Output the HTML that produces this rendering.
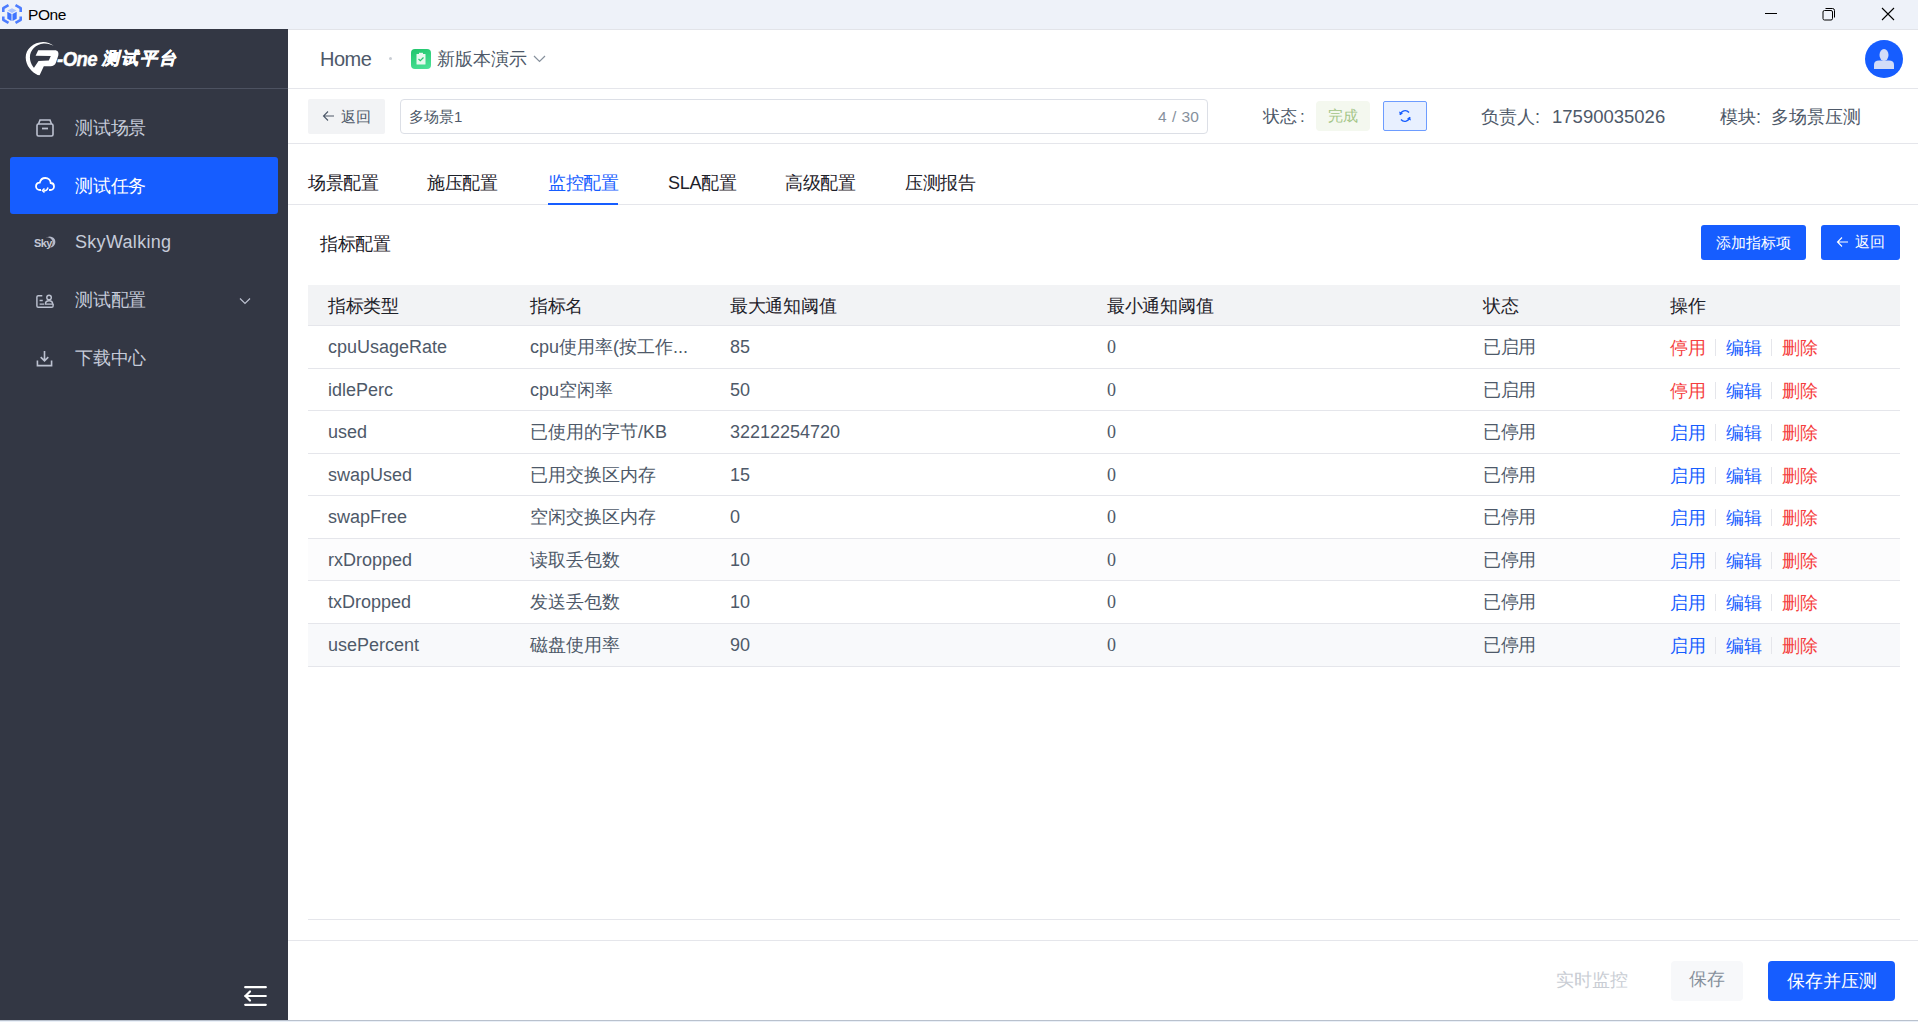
<!DOCTYPE html>
<html><head><meta charset="utf-8">
<style>
*{box-sizing:border-box;margin:0;padding:0}
html,body{width:1918px;height:1022px;overflow:hidden;background:#fff;font-family:"Liberation Sans",sans-serif;color:#1d2129}
.abs{position:absolute}
#titlebar{position:absolute;left:0;top:0;width:1918px;height:29px;background:#eef2f9}
#side{position:absolute;left:0;top:29px;width:288px;height:991px;background:#333744}
#main{position:absolute;left:288px;top:30px;width:1630px;height:990px;background:#fff}
#bottomline{position:absolute;left:0;top:1020px;width:1918px;height:2px;background:#eaf0f8;border-top:1px solid #b9c1cd}
.hl{position:absolute;height:1px;background:#e5e6eb}
.menu{position:absolute;left:0;width:288px;height:57px;color:#c6cbd9;font-size:18px}
.menu .ic{position:absolute;left:36px;top:20px;width:18px;height:18px}
.menu .tx{position:absolute;left:75px;top:0;line-height:57px;letter-spacing:-0.25px}
.tab{position:absolute;top:171px;font-size:18px;line-height:24px;color:#1d2129;letter-spacing:-0.3px}
.th{position:absolute;top:294px;font-size:18px;line-height:24px;color:#1d2129;letter-spacing:-0.3px}
.row{position:absolute;left:308px;width:1592px;height:43px;border-bottom:1px solid #e5e6eb}
.cell{position:absolute;top:0;line-height:42px;font-size:18px;color:#4e5969;white-space:nowrap}
.serif{font-family:"Liberation Serif",serif}
.op{position:absolute;top:1px;line-height:42px;font-size:18px;white-space:nowrap;letter-spacing:-0.3px}
.red{color:#f53f3f}.blue{color:#165dff}
.sep{position:absolute;top:13px;width:1px;height:17px;background:#e5e6eb}
</style></head><body>
<div id="titlebar">
  <svg class="abs" style="left:1px;top:3px" width="22" height="22" viewBox="0 0 22 22">
    <g fill="none" stroke="#4d7dff" stroke-width="2.6" stroke-linejoin="round">
      <path d="M7.5 2.2 L2.3 5.2 L2.3 9"/>
      <path d="M14.5 2.2 L19.7 5.2 L19.7 9"/>
      <path d="M2.3 13.5 L2.3 16.8 L7.5 19.8"/>
      <path d="M19.7 13.5 L19.7 16.8 L14.5 19.8"/>
    </g>
    <path d="M6.3 8.8 L10.5 11 L10.5 18 L6.3 15.8Z" fill="#3f74ff"/>
    <path d="M15.7 8.8 L11.5 11 L11.5 18 L15.7 15.8Z" fill="#3f74ff"/>
    <path d="M6.5 7.6 L11 5.3 L15.5 7.6 L11 9.9Z" fill="#a9c3ff"/>
  </svg>
  <div class="abs" style="left:28px;top:5px;font-size:15.5px;line-height:20px;color:#000;letter-spacing:-0.4px">POne</div>
  <div class="abs" style="left:1765px;top:13px;width:12px;height:1px;background:#000"></div>
  <svg class="abs" style="left:1822px;top:7px" width="14" height="14" viewBox="0 0 14 14"><rect x="1" y="3.5" width="9.5" height="9.5" rx="1.5" fill="none" stroke="#000" stroke-width="1"/><path d="M3.5 1.5 H10.5 A2 2 0 0 1 12.5 3.5 V10.5" fill="none" stroke="#000" stroke-width="1"/></svg>
  <svg class="abs" style="left:1881px;top:7px" width="14" height="14" viewBox="0 0 14 14"><path d="M1 1 L13 13 M13 1 L1 13" stroke="#000" stroke-width="1.1"/></svg>
</div>

<div id="side">
  <!-- logo -->
  <svg class="abs" style="left:20px;top:9px" width="50" height="42" viewBox="20 38 50 42">
    <path d="M53.7 45.8 C50.5 43 46.5 41.8 43 41.9 C33.5 42.2 25.6 49 25.7 57.5 C25.8 65.5 31.5 72.5 38.5 75.3 L40 73 C34.5 70 30 64 29.9 57.5 C29.8 50 36 44.2 43.5 43.5 C47.5 43.2 51 44.3 53.7 45.8 Z" fill="#fff"/>
    <path d="M38.2 50.3 L54.8 50.3 C57.8 50.3 59 52.5 58.3 55.5 L56 62.5 C55 65 53.2 66.3 50.5 66.3 L43.8 66.3 L39.6 75.3 L37 74.5 L33.5 68.5 L38.5 61 L48.8 60.6 L50.8 56 L35.6 55.7 Z" fill="#fff"/>
  </svg>
  <div class="abs" style="left:57px;top:16px;font-size:20px;line-height:28px;font-weight:bold;font-style:italic;color:#fff;letter-spacing:-0.6px;transform:scaleX(0.93);transform-origin:left;-webkit-text-stroke:0.4px #fff">-One</div>
  <div class="abs" style="left:102px;top:17px;font-size:17px;line-height:26px;font-weight:bold;font-style:italic;color:#fff;letter-spacing:2px;-webkit-text-stroke:0.5px #fff">测试平台</div>
  <div class="abs" style="left:0;top:59px;width:288px;height:1px;background:#4d5261"></div>

  <div class="menu" style="top:71px">
    <svg class="ic" viewBox="0 0 18 18" style="left:36px;top:19px"><rect x="1" y="5" width="16" height="12" rx="1.5" fill="none" stroke="#bcc1d0" stroke-width="1.6"/><path d="M2.5 5 L4 1 H14 L15.5 5" fill="none" stroke="#bcc1d0" stroke-width="1.6"/><path d="M6 9.5 H12" stroke="#bcc1d0" stroke-width="1.8"/></svg>
    <div class="tx">测试场景</div>
  </div>
  <div class="abs" style="left:10px;top:128px;width:268px;height:57px;background:#165dff;border-radius:3px"></div>
  <div class="menu" style="top:129px;color:#fff">
    <svg class="ic" viewBox="0 0 20 18" style="left:35px;top:18px;width:20px"><path d="M6 14 H5 C2.5 14 1 12.3 1 10.2 C1 8 2.8 6.5 4.8 6.6 C5.5 3.6 7.8 2 10.3 2 C13.3 2 15.5 4.3 15.7 7 C17.6 7 19 8.5 19 10.4 C19 12.4 17.5 14 15.5 14 H14" fill="none" stroke="#fff" stroke-width="1.8"/><path d="M13 11.5 C12.5 13.8 10.8 15 9 14.5" fill="none" stroke="#fff" stroke-width="1.6"/><path d="M9.5 12.5 L7.5 14.5 L9.5 16.5" fill="none" stroke="#fff" stroke-width="1.6"/></svg>
    <div class="tx">测试任务</div>
  </div>
  <div class="menu" style="top:185px">
    <svg class="abs" style="left:42px;top:21px" width="14" height="14" viewBox="0 0 14 14"><circle cx="7.8" cy="7" r="5.6" fill="#b4b9ca"/><circle cx="5.3" cy="7.6" r="5.3" fill="#333744"/></svg><div class="abs" style="left:34px;top:1px;line-height:57px;font-size:11px;font-weight:bold;color:#c3c7d4;letter-spacing:-0.6px;text-shadow:0 0 1px #333744">Sky</div>
    <div class="tx" style="letter-spacing:0.3px">SkyWalking</div>
  </div>
  <div class="menu" style="top:243px">
    <svg class="ic" viewBox="0 0 20 18" style="left:36px;top:21px;width:18px;height:16px" preserveAspectRatio="none"><path d="M7 3 H2.5 C1.7 3 1 3.7 1 4.5 V14.5 C1 15.3 1.7 16 2.5 16 H17.5 C18.3 16 19 15.3 19 14.5 V12" fill="none" stroke="#bcc1d0" stroke-width="1.6"/><path d="M4 8.5 H7.5 M4 12.5 H9" stroke="#bcc1d0" stroke-width="1.6"/><circle cx="14.5" cy="5" r="2.5" fill="none" stroke="#bcc1d0" stroke-width="1.6"/><path d="M10.5 12.5 C10.5 10 12.3 8.7 14.5 8.7 C16.7 8.7 18.5 10 18.5 12.5Z" fill="none" stroke="#bcc1d0" stroke-width="1.6"/></svg>
    <div class="tx">测试配置</div>
    <svg class="abs" style="left:239px;top:25px" width="12" height="8" viewBox="0 0 12 8"><path d="M1 1.5 L6 6.5 L11 1.5" fill="none" stroke="#bcc1d0" stroke-width="1.2"/></svg>
  </div>
  <div class="menu" style="top:301px">
    <svg class="ic" viewBox="0 0 18 18" style="left:36px;top:20px;width:17px;height:17px"><path d="M9 1 V11 M5 7.5 L9 11.5 L13 7.5" fill="none" stroke="#bcc1d0" stroke-width="1.7"/><path d="M1.5 11 V16.5 H16.5 V11" fill="none" stroke="#bcc1d0" stroke-width="1.7"/></svg>
    <div class="tx">下载中心</div>
  </div>
  <svg class="abs" style="left:243px;top:956px" width="24" height="22" viewBox="0 0 24 22"><path d="M2.2 2.2 H22.8 M2.5 11 H22.8 M2.2 19.8 H22.8" stroke="#fff" stroke-width="2.2" stroke-linecap="round"/><path d="M7 6.5 L2.5 11 L7 15.5" fill="none" stroke="#fff" stroke-width="2.2" stroke-linecap="round"/></svg>
</div>

<div id="main"></div>
<div class="hl" style="left:288px;top:29px;width:1630px;background:#e2e4e9"></div>
<!-- header -->
<div class="abs" style="left:320px;top:47px;font-size:20px;line-height:24px;color:#4e5969;letter-spacing:-0.5px">Home</div>
<div class="abs" style="left:389px;top:57px;width:3px;height:3px;border-radius:50%;background:#c9cdd4"></div>
<div class="abs" style="left:411px;top:49px;width:20px;height:20px;border-radius:4px;background:linear-gradient(160deg,#1fc46a,#4ee39a)"></div>
<svg class="abs" style="left:411px;top:49px" width="20" height="20" viewBox="0 0 20 20"><rect x="5.5" y="5" width="9" height="10.5" fill="#e8f9ef" rx="0.5"/><rect x="8" y="3.8" width="4" height="2" fill="#e8f9ef"/><path d="M7.5 10 L9.3 11.7 L12.5 8.5" fill="none" stroke="#27c46f" stroke-width="1.2"/></svg>
<div class="abs" style="left:437px;top:47px;font-size:18px;line-height:24px;color:#4e5969">新版本演示</div>
<svg class="abs" style="left:533px;top:55px" width="13" height="8" viewBox="0 0 13 8"><path d="M1 1 L6.5 6.5 L12 1" fill="none" stroke="#86909c" stroke-width="1.2"/></svg>
<div class="abs" style="left:1865px;top:40px;width:38px;height:38px;border-radius:50%;background:#165dff"></div>
<svg class="abs" style="left:1865px;top:40px" width="38" height="38" viewBox="0 0 38 38"><ellipse cx="19" cy="15" rx="4.5" ry="6" fill="#d2dcf8"/><path d="M9 24.5 C9 22 11 20.5 14 20.5 H24 C27 20.5 29 22 29 24.5 V29 H9Z" fill="#d2dcf8"/></svg>
<div class="hl" style="left:288px;top:88px;width:1630px"></div>

<!-- row 2 -->
<div class="abs" style="left:308px;top:99px;width:77px;height:35px;background:#f2f3f5;border-radius:2px"></div>
<svg class="abs" style="left:322px;top:110px" width="13" height="12" viewBox="0 0 13 12"><path d="M12 6 H1.5 M6 1.5 L1.5 6 L6 10.5" fill="none" stroke="#4e5969" stroke-width="1.1"/></svg>
<div class="abs" style="left:341px;top:106px;font-size:15px;line-height:21px;color:#4e5969">返回</div>
<div class="abs" style="left:400px;top:99px;width:808px;height:35px;border:1px solid #dcdfe6;border-radius:4px"></div>
<div class="abs" style="left:409px;top:106px;font-size:15px;line-height:21px;color:#4e5969">多场景1</div>
<div class="abs" style="left:1158px;top:107px;font-size:15.5px;line-height:20px;color:#86909c;word-spacing:1px">4 / 30</div>
<div class="abs" style="left:1263px;top:105px;font-size:17px;line-height:24px;color:#4e5969">状态<span style="margin-left:3px">:</span></div>
<div class="abs" style="left:1316px;top:101px;width:54px;height:30px;background:#f4f8ef;border-radius:4px"></div>
<div class="abs" style="left:1328px;top:106px;font-size:15px;line-height:20px;color:#a3c587">完成</div>
<div class="abs" style="left:1383px;top:101px;width:44px;height:30px;background:#e8f0ff;border:1px solid #6d9cff;border-radius:2px"></div>
<svg class="abs" style="left:1398px;top:109px" width="14" height="14" viewBox="0 0 14 14"><path d="M2.2 6 A5 5 0 0 1 11 3.5 M11.8 8 A5 5 0 0 1 3 10.5" fill="none" stroke="#165dff" stroke-width="1.4"/><path d="M1 2.5 L2.2 6.2 L5 4.2Z M13 11.5 L11.8 7.8 L9 9.8Z" fill="#165dff"/></svg>
<div class="abs" style="left:1481px;top:105px;font-size:18px;line-height:24px;color:#4e5969;white-space:nowrap">负责人<span style="margin-right:12px">:</span><span style="font-size:18.5px">17590035026</span></div>
<div class="abs" style="left:1720px;top:105px;font-size:18px;line-height:24px;color:#4e5969;white-space:nowrap">模块<span style="margin-right:10px">:</span>多场景压测</div>
<div class="hl" style="left:288px;top:143px;width:1630px"></div>

<!-- tabs -->
<div class="tab" style="left:308px">场景配置</div>
<div class="tab" style="left:427px">施压配置</div>
<div class="tab" style="left:548px;color:#165dff">监控配置</div>
<div class="tab" style="left:668px">SLA配置</div>
<div class="tab" style="left:785px">高级配置</div>
<div class="tab" style="left:905px">压测报告</div>
<div class="hl" style="left:288px;top:204px;width:1630px"></div>
<div class="abs" style="left:548px;top:203px;width:70px;height:2px;background:#165dff"></div>

<!-- section -->
<div class="abs" style="left:320px;top:232px;font-size:18px;line-height:24px;color:#1d2129;letter-spacing:-0.3px">指标配置</div>
<div class="abs" style="left:1701px;top:225px;width:105px;height:35px;background:#165dff;border-radius:3px;color:#fff;font-size:15px;line-height:35px;text-align:center">添加指标项</div>
<div class="abs" style="left:1821px;top:225px;width:79px;height:35px;background:#165dff;border-radius:3px"></div>
<svg class="abs" style="left:1836px;top:236px" width="13" height="12" viewBox="0 0 13 12"><path d="M12 6 H1.5 M6 1.5 L1.5 6 L6 10.5" fill="none" stroke="#fff" stroke-width="1.1"/></svg>
<div class="abs" style="left:1855px;top:232px;font-size:15px;line-height:20px;color:#fff">返回</div>

<!-- table header -->
<div class="abs" style="left:308px;top:285px;width:1592px;height:41px;background:#f2f3f5;border-bottom:1px solid #e5e6eb"></div>
<div class="th" style="left:328px">指标类型</div>
<div class="th" style="left:530px">指标名</div>
<div class="th" style="left:730px">最大通知阈值</div>
<div class="th" style="left:1107px">最小通知阈值</div>
<div class="th" style="left:1483px">状态</div>
<div class="th" style="left:1670px">操作</div>
<div class="row" style="top:326px;height:43px;">
  <div class="cell" style="left:20px">cpuUsageRate</div><div class="cell" style="left:222px">cpu使用率(按工作...</div><div class="cell" style="left:422px">85</div><div class="cell serif" style="left:799px">0</div><div class="cell" style="left:1175px;letter-spacing:-0.3px">已启用</div>
  <div class="op red" style="left:1362px">停用</div><div class="sep" style="left:1407px"></div><div class="op blue" style="left:1418px">编辑</div><div class="sep" style="left:1463px"></div><div class="op red" style="left:1474px">删除</div>
</div>
<div class="row" style="top:369px;height:42px;">
  <div class="cell" style="left:20px">idlePerc</div><div class="cell" style="left:222px">cpu空闲率</div><div class="cell" style="left:422px">50</div><div class="cell serif" style="left:799px">0</div><div class="cell" style="left:1175px;letter-spacing:-0.3px">已启用</div>
  <div class="op red" style="left:1362px">停用</div><div class="sep" style="left:1407px"></div><div class="op blue" style="left:1418px">编辑</div><div class="sep" style="left:1463px"></div><div class="op red" style="left:1474px">删除</div>
</div>
<div class="row" style="top:411px;height:43px;">
  <div class="cell" style="left:20px">used</div><div class="cell" style="left:222px">已使用的字节/KB</div><div class="cell" style="left:422px">32212254720</div><div class="cell serif" style="left:799px">0</div><div class="cell" style="left:1175px;letter-spacing:-0.3px">已停用</div>
  <div class="op blue" style="left:1362px">启用</div><div class="sep" style="left:1407px"></div><div class="op blue" style="left:1418px">编辑</div><div class="sep" style="left:1463px"></div><div class="op red" style="left:1474px">删除</div>
</div>
<div class="row" style="top:454px;height:42px;">
  <div class="cell" style="left:20px">swapUsed</div><div class="cell" style="left:222px">已用交换区内存</div><div class="cell" style="left:422px">15</div><div class="cell serif" style="left:799px">0</div><div class="cell" style="left:1175px;letter-spacing:-0.3px">已停用</div>
  <div class="op blue" style="left:1362px">启用</div><div class="sep" style="left:1407px"></div><div class="op blue" style="left:1418px">编辑</div><div class="sep" style="left:1463px"></div><div class="op red" style="left:1474px">删除</div>
</div>
<div class="row" style="top:496px;height:43px;">
  <div class="cell" style="left:20px">swapFree</div><div class="cell" style="left:222px">空闲交换区内存</div><div class="cell" style="left:422px">0</div><div class="cell serif" style="left:799px">0</div><div class="cell" style="left:1175px;letter-spacing:-0.3px">已停用</div>
  <div class="op blue" style="left:1362px">启用</div><div class="sep" style="left:1407px"></div><div class="op blue" style="left:1418px">编辑</div><div class="sep" style="left:1463px"></div><div class="op red" style="left:1474px">删除</div>
</div>
<div class="row" style="top:539px;height:42px;background:#fcfcfd;">
  <div class="cell" style="left:20px">rxDropped</div><div class="cell" style="left:222px">读取丢包数</div><div class="cell" style="left:422px">10</div><div class="cell serif" style="left:799px">0</div><div class="cell" style="left:1175px;letter-spacing:-0.3px">已停用</div>
  <div class="op blue" style="left:1362px">启用</div><div class="sep" style="left:1407px"></div><div class="op blue" style="left:1418px">编辑</div><div class="sep" style="left:1463px"></div><div class="op red" style="left:1474px">删除</div>
</div>
<div class="row" style="top:581px;height:43px;">
  <div class="cell" style="left:20px">txDropped</div><div class="cell" style="left:222px">发送丢包数</div><div class="cell" style="left:422px">10</div><div class="cell serif" style="left:799px">0</div><div class="cell" style="left:1175px;letter-spacing:-0.3px">已停用</div>
  <div class="op blue" style="left:1362px">启用</div><div class="sep" style="left:1407px"></div><div class="op blue" style="left:1418px">编辑</div><div class="sep" style="left:1463px"></div><div class="op red" style="left:1474px">删除</div>
</div>
<div class="row" style="top:624px;height:43px;background:#f8f9fb;">
  <div class="cell" style="left:20px">usePercent</div><div class="cell" style="left:222px">磁盘使用率</div><div class="cell" style="left:422px">90</div><div class="cell serif" style="left:799px">0</div><div class="cell" style="left:1175px;letter-spacing:-0.3px">已停用</div>
  <div class="op blue" style="left:1362px">启用</div><div class="sep" style="left:1407px"></div><div class="op blue" style="left:1418px">编辑</div><div class="sep" style="left:1463px"></div><div class="op red" style="left:1474px">删除</div>
</div>
<div class="hl" style="left:308px;top:919px;width:1592px"></div>
<div class="hl" style="left:288px;top:940px;width:1630px"></div>
<div class="abs" style="left:1556px;top:968px;font-size:18px;line-height:24px;color:#c9cdd4">实时监控</div>
<div class="abs" style="left:1671px;top:961px;width:72px;height:40px;background:#f7f8fa;border-radius:4px;color:#86909c;font-size:18px;line-height:37px;text-align:center">保存</div>
<div class="abs" style="left:1768px;top:961px;width:127px;height:40px;background:#165dff;border-radius:4px;color:#fff;font-size:18px;line-height:40px;text-align:center">保存并压测</div>

<div id="bottomline"></div>
</body></html>
